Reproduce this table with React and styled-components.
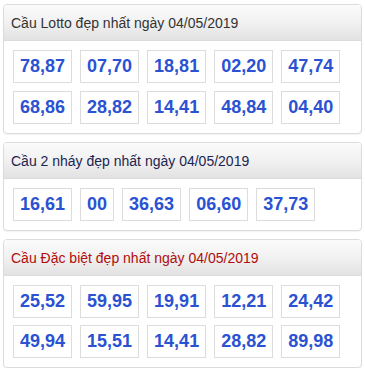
import React from "react";
import styled, { createGlobalStyle } from "styled-components";

const Global = createGlobalStyle`
  html, body { margin: 0; padding: 0; background: #fff; }
  body { font-family: "Liberation Sans", Arial, sans-serif; }
`;

const Page = styled.div`
  display: flex;
  flex-direction: column;
  gap: 8px;
  padding: 4px 3px 0 3px;
  width: 359px;
`;

const Panel = styled.section`
  border: 1px solid #dcdcdc;
  border-radius: 4px;
  background: #fff;
  box-shadow: 0 1px 1px rgba(0, 0, 0, 0.05);
  overflow: hidden;
`;

const Header = styled.div`
  height: 35px;
  display: flex;
  align-items: center;
  padding: 0 7px;
  background: linear-gradient(to bottom, #fbfbfb 0%, #f1f1f1 50%, #e2e2e2 100%);
  border-bottom: 1px solid #dcdcdc;
  font-size: 14px;
  color: ${(p) => p.$color};
`;

const Body = styled.div`
  display: flex;
  flex-wrap: wrap;
  gap: ${(p) => p.$rowGap}px 8px;
  padding: 9px 9px 9px 9px;
`;

const Num = styled.div`
  height: 31px;
  line-height: 31px;
  border: 1px solid #dcdcdc;
  padding: 0 6px;
  min-width: ${(p) => (p.$wide ? "43px" : "0")};
  text-align: center;
  font-weight: bold;
  font-size: 18px;
  color: #2a52d2;
`;

const panels = [
  {
    title: "Cầu Lotto đẹp nhất ngày 04/05/2019",
    color: "#333333",
    rowGap: 8,
    nums: ["78,87", "07,70", "18,81", "02,20", "47,74", "68,86", "28,82", "14,41", "48,84", "04,40"],
  },
  {
    title: "Cầu 2 nháy đẹp nhất ngày 04/05/2019",
    color: "#1c2450",
    rowGap: 8,
    nums: ["16,61", "00", "36,63", "06,60", "37,73"],
  },
  {
    title: "Cầu Đặc biệt đẹp nhất ngày 04/05/2019",
    color: "#b00d0d",
    rowGap: 7,
    nums: ["25,52", "59,95", "19,91", "12,21", "24,42", "49,94", "15,51", "14,41", "28,82", "89,98"],
  },
];

export default function App() {
  return (
    <>
      <Global />
      <Page>
        {panels.map((p) => (
          <Panel key={p.title}>
            <Header $color={p.color}>{p.title}</Header>
            <Body $rowGap={p.rowGap}>
              {p.nums.map((n, i) => (
                <Num key={i} $wide={n.length > 2}>{n}</Num>
              ))}
            </Body>
          </Panel>
        ))}
      </Page>
    </>
  );
}
